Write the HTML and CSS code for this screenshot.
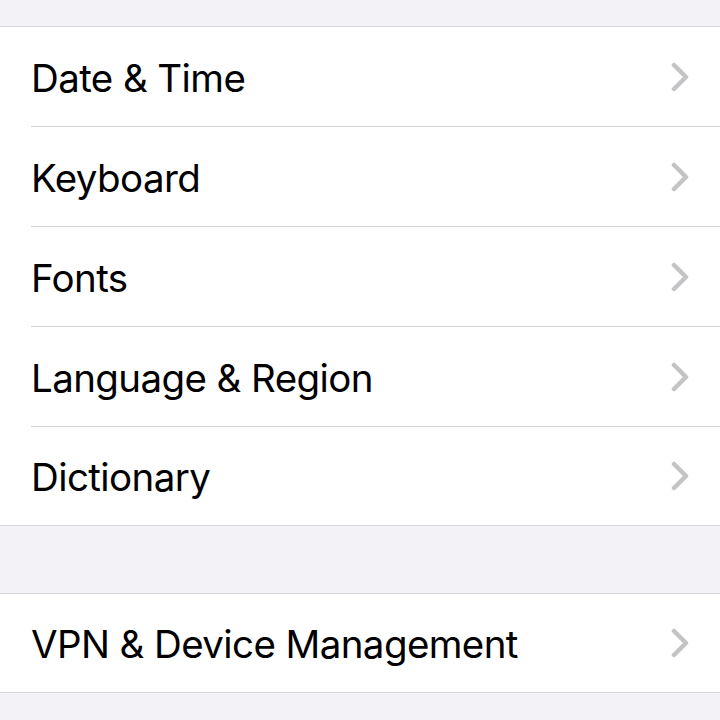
FILE: index.html
```html
<!DOCTYPE html>
<html lang="en">
<head>
    <meta charset="UTF-8">
    <meta name="viewport" content="width=device-width, initial-scale=1.0">
    <title>General</title>
    <link rel="stylesheet" href="styles.css">
</head>
<body>
    <div class="settings">
        <ul class="group">
            <li class="row"><span>Date &amp; Time</span><svg class="chevron" viewBox="0 0 20 30"><path d="M4 3 L16 15 L4 27"/></svg></li>
            <li class="row"><span>Keyboard</span><svg class="chevron" viewBox="0 0 20 30"><path d="M4 3 L16 15 L4 27"/></svg></li>
            <li class="row"><span>Fonts</span><svg class="chevron" viewBox="0 0 20 30"><path d="M4 3 L16 15 L4 27"/></svg></li>
            <li class="row"><span>Language &amp; Region</span><svg class="chevron" viewBox="0 0 20 30"><path d="M4 3 L16 15 L4 27"/></svg></li>
            <li class="row"><span>Dictionary</span><svg class="chevron" viewBox="0 0 20 30"><path d="M4 3 L16 15 L4 27"/></svg></li>
        </ul>
        <ul class="group">
            <li class="row"><span>VPN &amp; Device Management</span><svg class="chevron" viewBox="0 0 20 30"><path d="M4 3 L16 15 L4 27"/></svg></li>
        </ul>
    </div>
</body>
</html>
```

FILE: styles.css
```css
body {
    margin: 0;
    padding: 0;
    background-color: #f2f2f7;
    font-family: Inter, "Liberation Sans", sans-serif;
    color: #000;
}
.settings {
    display: flex;
    flex-direction: column;
    gap: 67px;
    padding-top: 26px;
}
.group {
    list-style: none;
    margin: 0;
    padding: 0 0 0 31px;
    background: #fff;
    border-top: 1px solid #d6d6da;
    border-bottom: 1px solid #d6d6da;
}
.row {
    display: flex;
    align-items: center;
    justify-content: space-between;
    height: 100px;
    padding-right: 30px;
    padding-top: 2px;
    box-sizing: border-box;
    font-size: 38.5px;
    letter-spacing: -0.6px;
    border-bottom: 1px solid #d6d6da;
}
.row:last-child {
    border-bottom: none;
    height: 98px;
}
.chevron {
    width: 20px;
    height: 30px;
    margin-top: -2px;
    fill: none;
    stroke: #c4c4c7;
    stroke-width: 4.5;
    stroke-linecap: round;
    stroke-linejoin: round;
}
```
